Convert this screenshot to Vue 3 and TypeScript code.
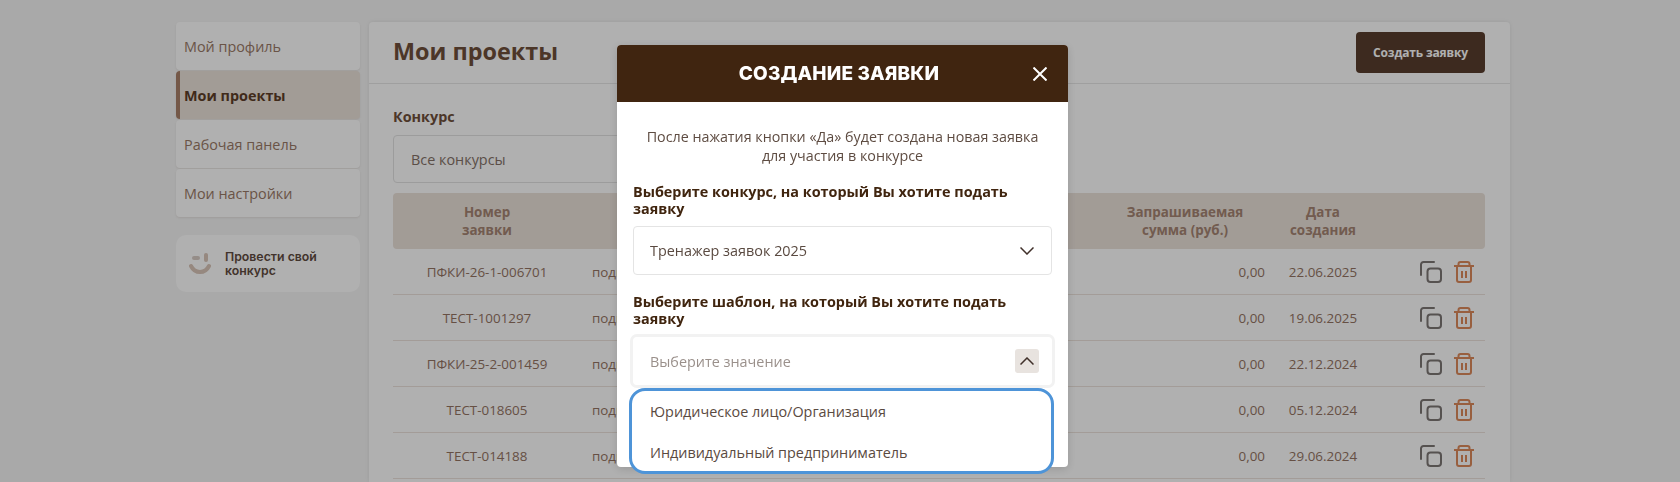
<script setup lang="ts">
interface IProject {
  number: string;
  status: string;
  amount: string;
  created: string;
}

const menu = [
  { label: "Мой профиль", active: false },
  { label: "Мои проекты", active: true },
  { label: "Рабочая панель", active: false },
  { label: "Мои настройки", active: false },
];

const projects: IProject[] = [
  { number: "ПФКИ-26-1-006701", status: "подготовка", amount: "0,00", created: "22.06.2025" },
  { number: "ТЕСТ-1001297", status: "подготовка", amount: "0,00", created: "19.06.2025" },
  { number: "ПФКИ-25-2-001459", status: "подготовка", amount: "0,00", created: "22.12.2024" },
  { number: "ТЕСТ-018605", status: "подготовка", amount: "0,00", created: "05.12.2024" },
  { number: "ТЕСТ-014188", status: "подготовка", amount: "0,00", created: "29.06.2024" },
];

const templates = ["Юридическое лицо/Организация", "Индивидуальный предприниматель"];
</script>

<template>
  <div class="page">
    <aside class="side">
      <nav class="menu">
        <a v-for="item in menu" :key="item.label" class="menuItem" :class="{ active: item.active }">
          {{ item.label }}
        </a>
      </nav>
      <div class="promo">
        <svg class="smile" width="22" height="21" viewBox="0 0 22 21" fill="none">
          <path d="M5 5h4" stroke="#d8cdc6" stroke-width="4" stroke-linecap="round" />
          <path d="M17 2v5" stroke="#d9c5b8" stroke-width="4" stroke-linecap="round" />
          <path d="M2 13c2 4 5 6 9 6s7-2 9-6" stroke="#d9c5b8" stroke-width="4" stroke-linecap="round" />
        </svg>
        <span>Провести свой конкурс</span>
      </div>
    </aside>

    <main class="panel">
      <header class="panelHead">
        <h1>Мои проекты</h1>
        <button class="createBtn">Создать заявку</button>
      </header>
      <div class="panelBody">
        <div class="filterLabel">Конкурс</div>
        <div class="filter">Все конкурсы</div>
        <div class="row headRow">
          <div class="cell">Номер<br />заявки</div>
          <div class="cell">Статус</div>
          <div class="cell"></div>
          <div class="cell">Запрашиваемая<br />сумма (руб.)</div>
          <div class="cell">Дата<br />создания</div>
          <div class="cell"></div>
        </div>
        <div v-for="p in projects" :key="p.number" class="row bodyRow">
          <div class="cell center">{{ p.number }}</div>
          <div class="cell">{{ p.status }}</div>
          <div class="cell"></div>
          <div class="cell amount">{{ p.amount }}</div>
          <div class="cell center">{{ p.created }}</div>
          <div class="cell actions">
            <svg width="22" height="22" viewBox="0 0 22 22" fill="none" stroke="#7d7775" stroke-width="2">
              <path d="M14 1H3.5A2.5 2.5 0 0 0 1 3.5V14" stroke-linecap="round" />
              <rect x="7.5" y="7.5" width="13.5" height="13.5" rx="3" />
            </svg>
            <svg width="20" height="22" viewBox="0 0 20 22" fill="none" stroke="#dd8a5c" stroke-width="2">
              <path d="M0 5h20" />
              <path d="M4.5 5V3a2 2 0 0 1 2-2h7a2 2 0 0 1 2 2v2" />
              <path d="M3 5v14a2 2 0 0 0 2 2h10a2 2 0 0 0 2-2V5" />
              <path d="M8 10v7M12 10v7" />
            </svg>
          </div>
        </div>
      </div>
    </main>

    <div class="overlay">
      <section class="modal">
        <header class="modalHead">
          <h2>СОЗДАНИЕ ЗАЯВКИ</h2>
          <svg class="close" width="14" height="14" viewBox="0 0 14 14" stroke="#fff" stroke-width="2">
            <path d="M0.5 0.5l13 13M13.5 0.5l-13 13" />
          </svg>
        </header>
        <div class="modalBody">
          <p class="note">После нажатия кнопки «Да» будет создана новая заявка для участия в конкурсе</p>
          <label class="fieldLabel first">Выберите конкурс, на который Вы хотите подать заявку</label>
          <div class="select">
            <span>Тренажер заявок 2025</span>
            <svg width="14" height="8" viewBox="0 0 14 8" fill="none" stroke="#40302a" stroke-width="1.5">
              <path d="M0.5 0.5L7 7l6.5-6.5" />
            </svg>
          </div>
          <label class="fieldLabel second">Выберите шаблон, на который Вы хотите подать заявку</label>
          <div class="select open">
            <span class="placeholder">Выберите значение</span>
            <span class="chevronBox">
              <svg width="14" height="8" viewBox="0 0 14 8" fill="none" stroke="#40302a" stroke-width="1.5">
                <path d="M0.5 7.5L7 1l6.5 6.5" />
              </svg>
            </span>
            <ul class="dropdown">
              <li v-for="t in templates" :key="t">{{ t }}</li>
            </ul>
          </div>
        </div>
      </section>
    </div>
  </div>
</template>

<style>
html,
body {
  margin: 0;
  height: 482px;
  overflow: hidden;
  background: #f5f5f5;
}
</style>

<style scoped>
.page {
  box-sizing: border-box;
  height: 482px;
  display: flex;
  gap: 9px;
  padding: 22px 170px 0 176px;
  overflow: hidden;
  font-family: "Open Sans", sans-serif;
}
.side {
  width: 184px;
  flex-shrink: 0;
}
.menu {
  display: flex;
  flex-direction: column;
  gap: 1px;
}
.menuItem {
  height: 48px;
  padding-left: 8px;
  display: flex;
  align-items: center;
  font-size: 14.4px;
  color: #9a7a67;
  background: #fff;
  border-radius: 4px;
  box-shadow: 0 1px 2px rgba(120, 90, 70, 0.12);
}
.menuItem.active {
  padding-left: 4px;
  border-left: 4px solid #a98069;
  background: #ebe2da;
  color: #5d3d28;
  font-weight: 700;
}
.promo {
  margin-top: 18px;
  height: 57px;
  background: #fff;
  border-radius: 10px;
  display: flex;
  align-items: center;
  gap: 14px;
  padding-left: 13px;
  font-family: Inter, sans-serif;
  font-size: 12.3px;
  font-weight: 600;
  line-height: 14px;
  color: #5f4b40;
}
.promo span {
  width: 110px;
}
.smile {
  flex-shrink: 0;
}
.panel {
  flex: 1;
  min-width: 0;
  background: #fff;
  box-shadow: 0 0 4px rgba(0, 0, 0, 0.08);
  border-radius: 4px 4px 0 0;
}
.panelHead {
  height: 62px;
  box-sizing: border-box;
  display: flex;
  align-items: flex-start;
  justify-content: space-between;
  padding: 10px 25px 0 24px;
  border-bottom: 1px solid #e7e7e7;
}
.panelHead h1 {
  margin: 0;
  font-size: 23.4px;
  line-height: 38px;
  font-weight: 700;
  color: #6f4f3b;
}
.createBtn {
  width: 129px;
  height: 41px;
  border: 0;
  border-radius: 4px;
  background: #593d2e;
  color: #fff;
  font-family: inherit;
  font-size: 12px;
  font-weight: 700;
  letter-spacing: -0.15px;
}
.panelBody {
  padding: 23px 25px 0 24px;
}
.filterLabel {
  font-size: 14.4px;
  font-weight: 700;
  line-height: 20px;
  color: #6f4f3b;
}
.filter {
  margin-top: 8px;
  width: 520px;
  height: 48px;
  box-sizing: border-box;
  display: flex;
  align-items: center;
  padding-left: 17px;
  border: 1px solid #e3e3e3;
  border-radius: 4px;
  font-size: 14.4px;
  color: #847268;
}
.row {
  display: grid;
  grid-template-columns: 188px 202px 1fr 180px 96px 114px;
}
.headRow {
  margin-top: 10px;
  height: 56px;
  align-items: center;
  text-align: center;
  background: #ebe2da;
  border-radius: 4px;
  font-size: 13.4px;
  font-weight: 700;
  line-height: 18px;
  color: #a58573;
}
.bodyRow {
  height: 46px;
  box-sizing: border-box;
  align-items: center;
  border-bottom: 1px solid #ece3dc;
  font-size: 13.4px;
  color: #947463;
}
.bodyRow .cell:nth-child(2) {
  padding-left: 11px;
}
.center {
  text-align: center;
}
.amount {
  text-align: right;
  padding-right: 10px;
}
.actions {
  display: flex;
  justify-content: flex-end;
  align-items: center;
  gap: 12px;
  padding-right: 11px;
}
.overlay {
  position: fixed;
  inset: 0;
  display: flex;
  justify-content: center;
  background: rgba(0, 0, 0, 0.31);
}
.modal {
  margin: 45px 0 0 5px;
  width: 451px;
  height: 422px;
  background: #fff;
  border-radius: 4px;
  box-shadow: 0 2px 10px rgba(0, 0, 0, 0.15);
}
.modalHead {
  position: relative;
  height: 57px;
  box-sizing: border-box;
  padding-right: 7px;
  display: flex;
  align-items: center;
  justify-content: center;
  background: #402510;
  border-radius: 4px 4px 0 0;
}
.modalHead h2 {
  margin: 0;
  font-family: Inter, sans-serif;
  font-size: 19px;
  font-weight: 800;
  letter-spacing: 0.15px;
  color: #fff;
}
.close {
  position: absolute;
  right: 21px;
  top: 22px;
}
.modalBody {
  padding: 25px 16px 0;
}
.note {
  margin: 0;
  padding: 0 12px;
  text-align: center;
  font-size: 14.3px;
  line-height: 19px;
  color: #5e4c42;
}
.fieldLabel {
  display: block;
  font-size: 14.4px;
  font-weight: 700;
  line-height: 17px;
  color: #40250f;
}
.fieldLabel.first {
  margin-top: 18px;
}
.fieldLabel.second {
  margin-top: 18px;
}
.select {
  position: relative;
  margin-top: 9px;
  height: 49px;
  box-sizing: border-box;
  display: flex;
  align-items: center;
  justify-content: space-between;
  padding: 0 17px 0 16px;
  border: 1px solid #e4e4e4;
  border-radius: 4px;
  font-size: 14.4px;
  color: #5a4a41;
}
.select.open {
  margin-top: 10px;
  height: 48px;
  padding-right: 12px;
  border-color: #fff;
  box-shadow: 0 0 0 3px #f2f2f2;
}
.placeholder {
  color: #9a908b;
}
.chevronBox {
  width: 24px;
  height: 24px;
  display: flex;
  align-items: center;
  justify-content: center;
  background: #e8e3df;
  border-radius: 3px;
}
.dropdown {
  position: absolute;
  left: -5px;
  right: -3px;
  top: 50px;
  height: 86px;
  box-sizing: border-box;
  margin: 0;
  padding: 0;
  list-style: none;
  background: #fff;
  border: 3px solid #4e94d8;
  border-radius: 16px;
}
.dropdown li {
  height: 41px;
  display: flex;
  align-items: center;
  padding-left: 18px;
  color: #5a4a41;
}
</style>
